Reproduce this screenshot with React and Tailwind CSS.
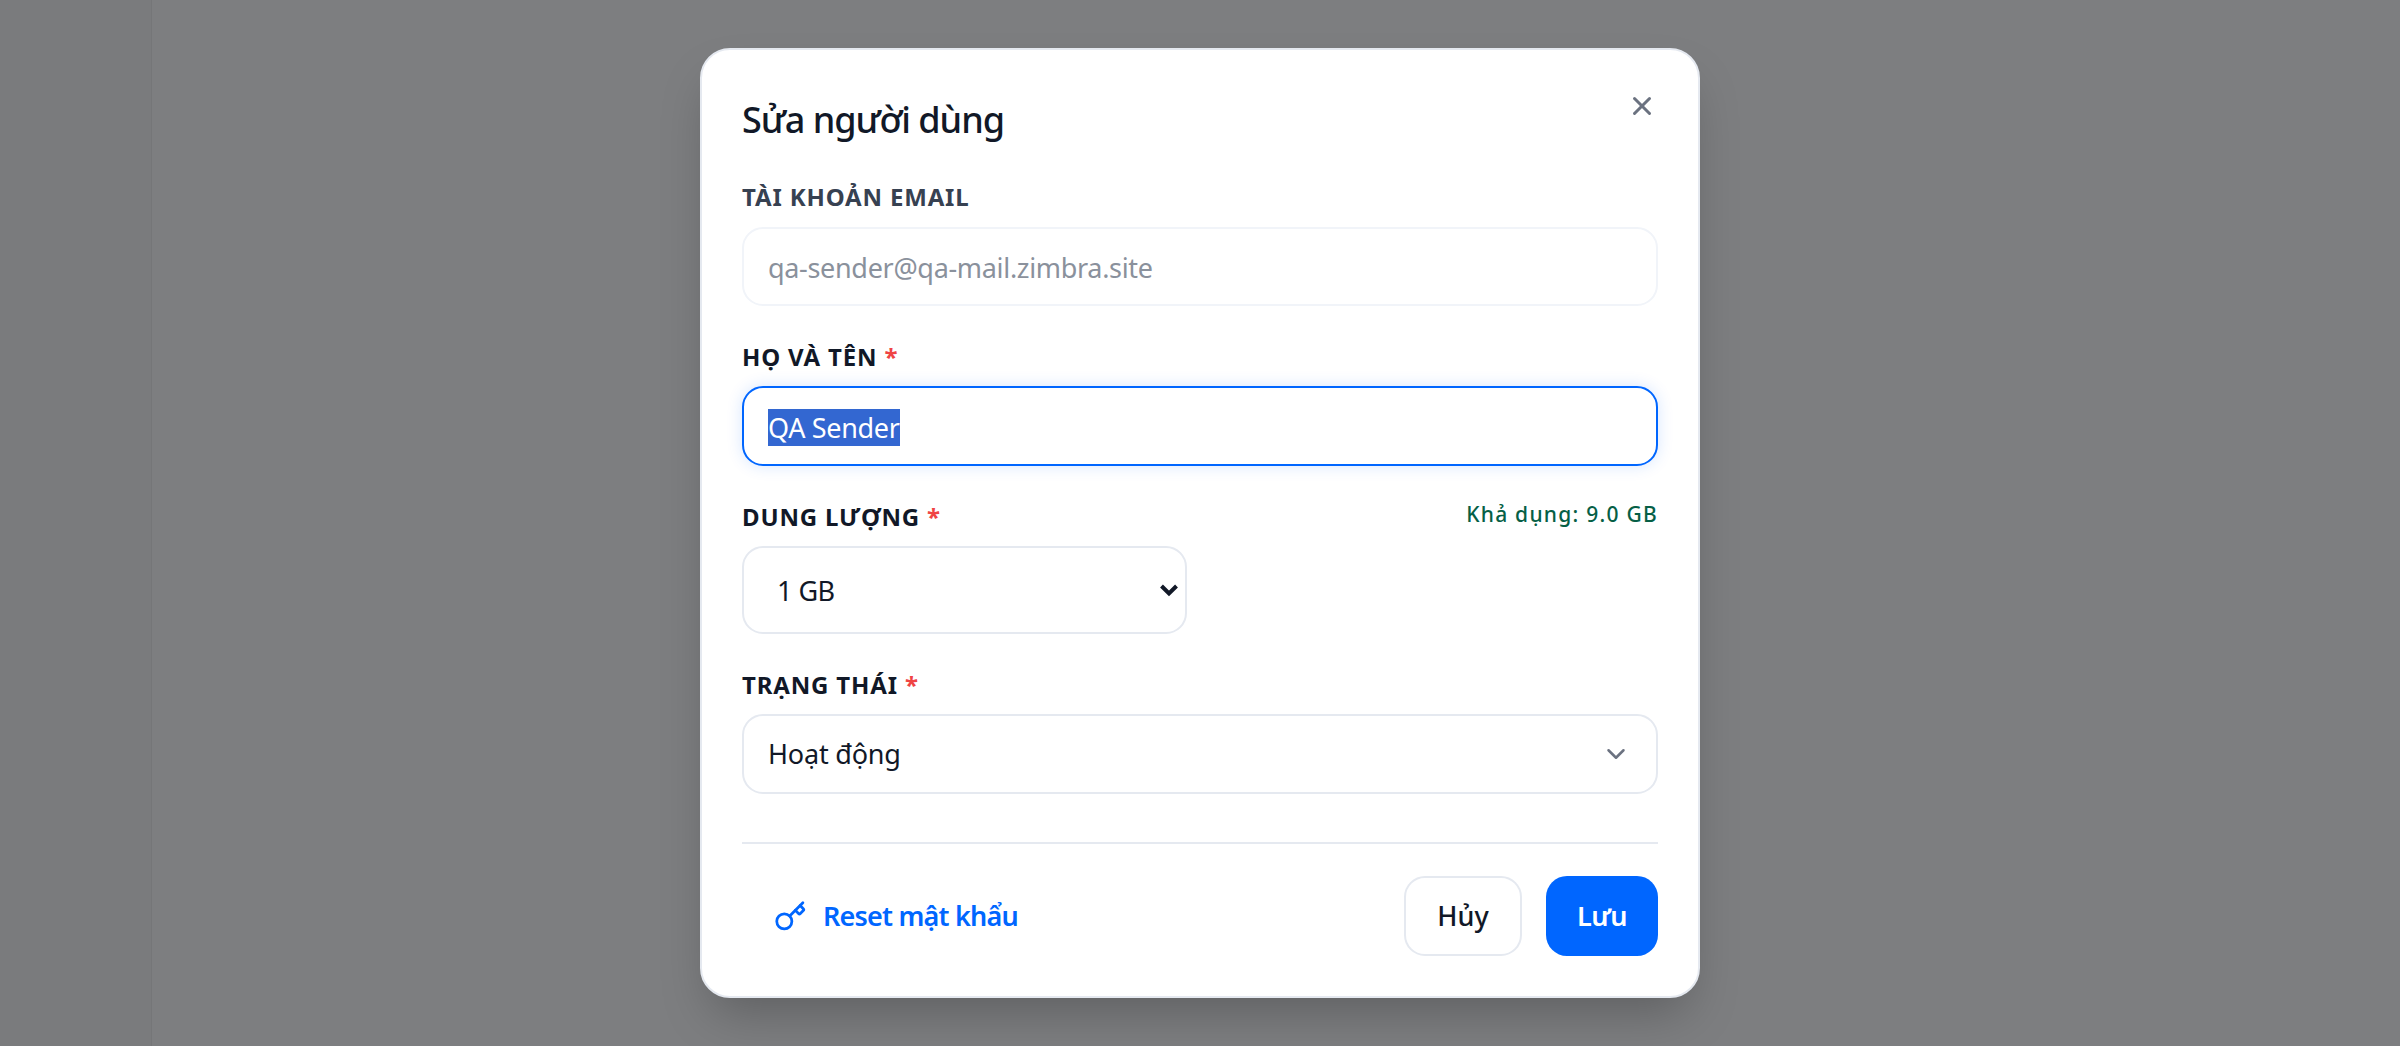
import React, { useEffect, useRef } from 'react';
import { X, ChevronDown, Key } from 'lucide-react';

const Label = ({ children, required, muted }) => (
    <label className={`block text-[24px] leading-[36px] font-bold tracking-[0.035em] ${muted ? 'text-[#374151]' : 'text-[#111827]'}`}>
        {children}
        {required && <span className="text-[#ef4444]"> *</span>}
    </label>
);

const App = () => {
    const nameRef = useRef(null);

    useEffect(() => {
        nameRef.current.focus();
        nameRef.current.select();
    }, []);

    return (
        <div className="relative flex h-screen overflow-hidden bg-[#7d7e80] font-['Noto_Sans',sans-serif]">
            <div className="w-[152px] shrink-0 border-r border-[#757678] bg-[#7a7b7d]"></div>
            <div className="flex-1"></div>

            <div className="absolute inset-0 flex items-center justify-center">
                <div className="relative w-[1000px] rounded-[30px] border-2 border-[#e5e9f0] bg-white px-[40px] pt-[43px] pb-[40px] shadow-[0_25px_50px_-12px_rgba(0,0,0,0.25)]">
                    <h2 className="text-[36px] leading-[54px] font-medium tracking-[-1.05px] text-[#111827]">Sửa người dùng</h2>
                    <button className="absolute top-[41px] right-[41px] text-[#6b7280]">
                        <X size={30} strokeWidth={2.4} />
                    </button>

                    <div className="mt-[32px]">
                        <Label muted>TÀI KHOẢN EMAIL</Label>
                        <input
                            disabled
                            defaultValue="qa-sender@qa-mail.zimbra.site"
                            className="mt-[12px] block h-[79px] w-full rounded-[21px] border-2 border-[#f1f4f9] bg-white px-[24px] pt-[2px] text-[27px] tracking-[-0.32px] text-[#8a919c]"
                        />
                    </div>

                    <div className="mt-[33px]">
                        <Label required>HỌ VÀ TÊN</Label>
                        <input
                            ref={nameRef}
                            defaultValue="QA Sender"
                            className="mt-[11px] block h-[80px] w-full rounded-[21px] border-2 border-[#0066ff] bg-white px-[24px] pt-[3px] text-[27px] tracking-[-0.33px] text-[#111827] shadow-[0_0_16px_rgba(0,102,255,0.16)] outline-none selection:bg-[#3367d1] selection:text-white"
                        />
                    </div>

                    <div className="mt-[33px]">
                        <div className="flex items-start justify-between">
                            <Label required>DUNG LƯỢNG</Label>
                            <span className="text-[21px] leading-[30px] font-medium tracking-[0.06em] text-[#065f46]">Khả dụng: 9.0 GB</span>
                        </div>
                        <div className="relative mt-[11px] w-[445px]">
                            <select className="block h-[88px] w-full appearance-none rounded-[21px] border-2 border-[#e5e9f0] bg-white pt-[2px] pr-[30px] pl-[33px] text-[27px] tracking-[-0.5px] text-[#111827]">
                                <option>1 GB</option>
                                <option>2 GB</option>
                                <option>5 GB</option>
                            </select>
                            <svg width="20" height="14" viewBox="0 0 20 14" className="pointer-events-none absolute top-[37px] right-[8px] text-[#111827]">
                                <path d="M2.5 3 L10 10.5 L17.5 3" fill="none" stroke="currentColor" strokeWidth="4" />
                            </svg>
                        </div>
                    </div>

                    <div className="mt-[33px]">
                        <Label required>TRẠNG THÁI</Label>
                        <div className="relative mt-[11px]">
                            <select className="block h-[80px] w-full appearance-none rounded-[21px] border-2 border-[#e5e9f0] bg-white px-[24px] text-[27px] tracking-[-0.2px] text-[#111827]">
                                <option>Hoạt động</option>
                                <option>Tạm khóa</option>
                            </select>
                            <ChevronDown size={30} className="pointer-events-none absolute top-[25px] right-[27px] text-[#6b7280]" />
                        </div>
                    </div>

                    <div className="mt-[48px] flex items-center justify-between border-t-2 border-[#e5e9f0] pt-[32px]">
                        <button className="flex items-center gap-[16px] pl-[32px] text-[27px] font-semibold tracking-[-0.8px] text-[#0066ff]">
                            <Key size={33} />
                            Reset mật khẩu
                        </button>
                        <div className="flex gap-[24px]">
                            <button className="h-[80px] w-[118px] rounded-[21px] border-2 border-[#e5e9f0] bg-white text-[27px] font-medium text-[#111827]">Hủy</button>
                            <button className="h-[80px] w-[112px] rounded-[21px] bg-[#0066ff] text-[27px] font-semibold tracking-[-0.5px] text-white">Lưu</button>
                        </div>
                    </div>
                </div>
            </div>
        </div>
    );
};

export default App;
